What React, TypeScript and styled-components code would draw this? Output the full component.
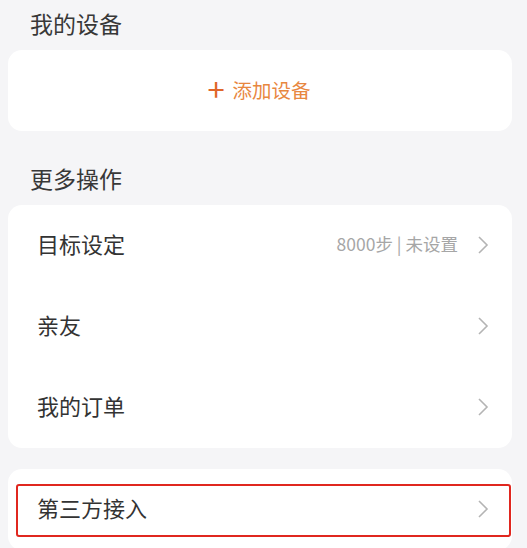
import React from 'react'
import styled, { createGlobalStyle } from 'styled-components'

const GlobalStyle = createGlobalStyle`
  body {
    margin: 0;
    background: #f5f5f7;
    font-family: "Noto Sans CJK SC", "Noto Sans", sans-serif;
  }
`

type Item = {
  title: string
  value?: string
}

const moreItems: Item[] = [
  { title: '目标设定', value: '8000步 | 未设置' },
  { title: '亲友' },
  { title: '我的订单' },
]

function Chevron() {
  return (
    <Arrow width="14" height="22" viewBox="0 0 14 22">
      <polyline points="3,3 11,11 3,19" fill="none" stroke="#b4b4b4" strokeWidth="1.6" />
    </Arrow>
  )
}

export default function App(): JSX.Element {
  return (
    <Page>
      <GlobalStyle />
      <SectionTitle>我的设备</SectionTitle>
      <Card>
        <AddButton>
          <Plus>+</Plus>添加设备
        </AddButton>
      </Card>

      <SectionTitle $spaced>更多操作</SectionTitle>
      <Card>
        {moreItems.map((item) => (
          <Row key={item.title}>
            <RowTitle>{item.title}</RowTitle>
            {item.value && <RowValue>{item.value}</RowValue>}
            <Chevron />
          </Row>
        ))}
      </Card>

      <Card $gap>
        <Row>
          <RowTitle>第三方接入</RowTitle>
          <Chevron />
        </Row>
        <Marker />
      </Card>
    </Page>
  )
}

const Page = styled.div`
  padding: 0 15px 0 8px;
  height: 548px;
  overflow: hidden;
`

const SectionTitle = styled.div<{ $spaced?: boolean }>`
  height: 50px;
  margin-top: ${(p) => (p.$spaced ? '24px' : '0')};
  padding: 0 0 5px 22px;
  box-sizing: border-box;
  display: flex;
  align-items: center;
  font-size: 23px;
  color: #383838;
`

const Card = styled.div<{ $gap?: boolean }>`
  position: relative;
  background: #fff;
  border-radius: 14px;
  margin-top: ${(p) => (p.$gap ? '21px' : '0')};
`

const AddButton = styled.div`
  height: 81px;
  display: flex;
  align-items: center;
  justify-content: center;
  padding: 0 2px 2px 0;
  box-sizing: border-box;
  font-size: 19.5px;
  color: #e8873f;
`

const Plus = styled.span`
  font-size: 31px;
  font-weight: 400;
  color: #e0662a;
  margin-right: 8px;
  line-height: 1;
  margin-top: -4px;
`

const Row = styled.div`
  height: 81px;
  display: flex;
  align-items: center;
  padding: 0 22px 0 29px;
`

const RowTitle = styled.div`
  flex: 1;
  font-size: 22px;
  color: #333;
  margin-top: -5px;
`

const RowValue = styled.div`
  font-size: 17.5px;
  color: #a6a6a6;
  margin: -4px 18px 0 0;
`

const Arrow = styled.svg`
  flex-shrink: 0;
  margin-top: -2px;
`

const Marker = styled.div`
  position: absolute;
  left: 8px;
  right: 1px;
  top: 15px;
  height: 53px;
  border: 2.5px solid #e0271f;
  border-radius: 3px;
  box-sizing: border-box;
  pointer-events: none;
`
